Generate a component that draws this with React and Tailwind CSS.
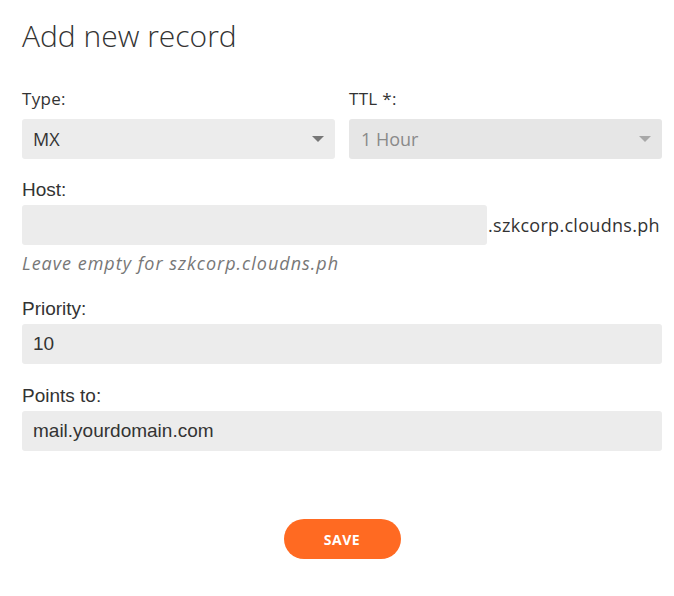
import React, { useState } from "react";

const Caret = ({ light }) => (
  <svg width="12" height="6" viewBox="0 0 12 6" className="pointer-events-none absolute right-[11px] top-[17px]">
    <path d="M0 0 L12 0 L6 6 Z" fill={light ? "#a8a8a8" : "#777777"} />
  </svg>
);

const App = () => {
  const [type, setType] = useState("MX");

  return (
    <div className="w-[674px] h-[596px] bg-white pl-[22px] pr-[12px] pt-[17px] text-[#333]">
      <h1 className="font-['Open_Sans',sans-serif] text-[30px] font-light leading-[38px] text-[#333]">
        Add new record
      </h1>

      <div className="mt-[33px] flex gap-[14px]">
        <div className="flex-1">
          <label className="block font-['Open_Sans',sans-serif] text-[17px] leading-[22px] tracking-[0.3px]">Type:</label>
          <div className="relative mt-[9px]">
            <select
              value={type}
              onChange={(e) => setType(e.target.value)}
              className="appearance-none w-full h-[40px] rounded-[3px] bg-[#ececec] pl-[11px] font-['Open_Sans',sans-serif] text-[18px] text-[#333] outline-none"
            >
              <option>MX</option>
              <option>A</option>
              <option>CNAME</option>
              <option>TXT</option>
            </select>
            <Caret />
          </div>
        </div>
        <div className="flex-1">
          <label className="block font-['Open_Sans',sans-serif] text-[17px] leading-[22px] tracking-[0.3px]">TTL *:</label>
          <div className="relative mt-[9px]">
            <select
              disabled
              className="appearance-none w-full h-[40px] rounded-[3px] bg-[#e6e6e6] pl-[12px] font-['Open_Sans',sans-serif] text-[18px] text-[#8a8a8a] outline-none"
            >
              <option>1 Hour</option>
            </select>
            <Caret light />
          </div>
        </div>
      </div>

      <div className="mt-[20px]">
        <label className="block font-['Liberation_Sans',Arial,sans-serif] text-[19px] leading-[22px]">Host:</label>
        <div className="mt-[4px] flex items-center">
          <input
            type="text"
            className="w-[465px] h-[40px] rounded-[3px] bg-[#ececec] px-[11px] font-['Liberation_Sans',Arial,sans-serif] text-[19px] outline-none"
          />
          <span className="pl-[1px] font-['Open_Sans',sans-serif] text-[18px] tracking-[0.3px] text-[#333]">
            .szkcorp.cloudns.ph
          </span>
        </div>
        <p className="mt-[7px] font-['Open_Sans',sans-serif] text-[18px] italic leading-[22px] tracking-[1px] text-[#777]">
          Leave empty for szkcorp.cloudns.ph
        </p>
      </div>

      <div className="mt-[24px]">
        <label className="block font-['Liberation_Sans',Arial,sans-serif] text-[19px] leading-[22px]">Priority:</label>
        <input
          type="text"
          defaultValue="10"
          className="mt-[4px] block w-full h-[40px] rounded-[3px] bg-[#ececec] px-[11px] font-['Liberation_Sans',Arial,sans-serif] text-[19px] text-[#333] outline-none"
        />
      </div>

      <div className="mt-[21px]">
        <label className="block font-['Liberation_Sans',Arial,sans-serif] text-[19px] leading-[22px]">Points to:</label>
        <input
          type="text"
          defaultValue="mail.yourdomain.com"
          className="mt-[4px] block w-full h-[40px] rounded-[3px] bg-[#ececec] px-[11px] font-['Liberation_Sans',Arial,sans-serif] text-[19px] text-[#333] outline-none"
        />
      </div>

      <div className="mt-[68px] flex justify-center">
        <button
          type="button"
          className="w-[117px] h-[40px] rounded-full bg-[#ff6a22] font-['Open_Sans',sans-serif] text-[14px] font-bold tracking-[0.5px] text-white"
        >
          SAVE
        </button>
      </div>
    </div>
  );
};

export default App;
